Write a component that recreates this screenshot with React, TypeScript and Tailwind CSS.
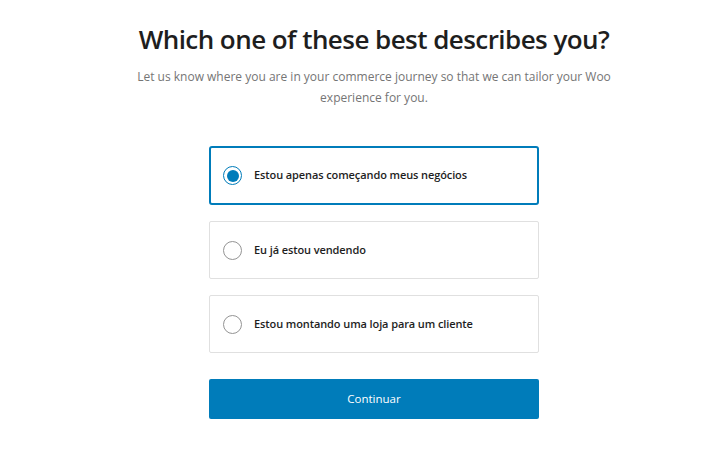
import React, { useState } from "react";

const options = [
  "Estou apenas começando meus negócios",
  "Eu já estou vendendo",
  "Estou montando uma loja para um cliente",
];

export default function App() {
  const [selected, setSelected] = useState(0);
  return (
    <div
      className="min-h-[469px] w-full bg-white pl-[20px] flex flex-col items-center"
      style={{ fontFamily: '"Open Sans", "Noto Sans", sans-serif' }}
    >
      <h1 className="mt-[21px] text-[26px] leading-[36px] font-semibold text-[#1e1e1e] tracking-[-0.55px] text-center">
        Which one of these best describes you?
      </h1>
      <p className="mt-[9px] w-[500px] text-center text-[12px] leading-[21px] text-[#757575]">
        Let us know where you are in your commerce journey so that we can tailor your Woo experience for you.
      </p>
      <div className="mt-[38px] w-[330px] flex flex-col gap-[16px]">
        {options.map((label, i) => {
          const active = i === selected;
          return (
            <button
              key={label}
              onClick={() => setSelected(i)}
              className={
                active
                  ? "h-[59px] w-full flex items-center gap-[12px] pl-[12px] rounded-[3px] border-2 border-[#007cba] bg-white text-left"
                  : "h-[58px] w-full flex items-center gap-[12px] pl-[12px] rounded-[2px] border border-[#e0e0e0] bg-white text-left"
              }
            >
              <span
                className={
                  active
                    ? "w-[19px] h-[19px] rounded-full border-[1.5px] border-[#007cba] flex items-center justify-center shrink-0"
                    : "w-[19px] h-[19px] rounded-full border-[1.5px] border-[#949494] ml-[1px] shrink-0"
                }
              >
                {active && <span className="w-[12px] h-[12px] rounded-full bg-[#007cba]" />}
              </span>
              <span className="text-[11px] font-semibold text-[#1e1e1e] tracking-[-0.1px]">{label}</span>
            </button>
          );
        })}
      </div>
      <button className="mt-[26px] w-[330px] h-[40px] rounded-[2px] bg-[#007cba] text-white text-[11.5px]">
        Continuar
      </button>
    </div>
  );
}
